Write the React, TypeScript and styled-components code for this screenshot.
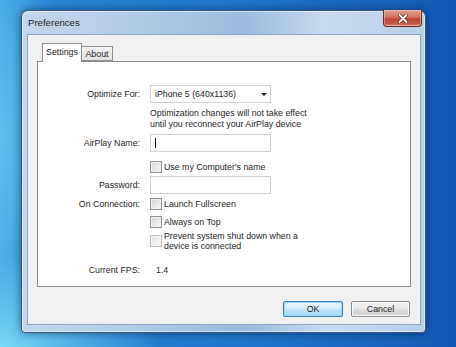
import React from "react";
import styled, { createGlobalStyle } from "styled-components";

const Global = createGlobalStyle`
  html, body { margin: 0; padding: 0; }
  body {
    width: 456px; height: 347px; overflow: hidden;
    font-family: "Liberation Sans", Arial, sans-serif;
  }
  * { box-sizing: border-box; }
`;

const Desktop = styled.div`
  width: 456px;
  height: 347px;
  padding: 10px 0 0 21px;
  background:
    radial-gradient(ellipse 160px 90px at 0% 100%, rgba(130, 225, 250, 0.85), rgba(130, 225, 250, 0) 100%),
    radial-gradient(ellipse 60px 200px at 0% 40%, rgba(110, 205, 245, 0.7), rgba(110, 205, 245, 0) 100%),
    linear-gradient(to right, #3aa3e0 0%, #2a86d6 12%, #1f74cc 55%, #1862bd 85%, #1256b3 100%);
`;

const Window = styled.div`
  width: 405px;
  height: 323px;
  display: flex;
  flex-direction: column;
  padding: 0 4px 7px 5px;
  border: 1px solid #38557a;
  border-radius: 7px 7px 4px 4px;
  background:
    linear-gradient(to right, rgba(255,255,255,0.25), rgba(255,255,255,0) 30%, rgba(70,120,180,0.2) 55%, rgba(255,255,255,0.3) 75%, rgba(255,255,255,0.1) 100%),
    #b0cae6;
  box-shadow: 0 0 8px rgba(0, 20, 60, 0.55), inset 0 0 0 1px rgba(255, 255, 255, 0.55);
`;

const TitleBar = styled.div`
  height: 23px;
  display: flex;
  align-items: center;
  padding-left: 1px;
`;

const Title = styled.span`
  font-size: 9.6px;
  color: #1b1b1b;
  margin-top: -1px;
`;

const CloseButton = styled.div`
  margin-left: auto;
  margin-right: -1px;
  margin-top: -1px;
  align-self: flex-start;
  width: 39px;
  height: 17px;
  display: flex;
  align-items: center;
  justify-content: center;
  border: 1px solid #6e2a22;
  border-top: none;
  border-radius: 0 0 4px 4px;
  background: linear-gradient(#e3a18f 0%, #d27560 45%, #bd4530 55%, #c55a42 85%, #d98a72 100%);
  box-shadow: inset 0 0 0 1px rgba(255, 220, 210, 0.4);
`;

const Client = styled.div`
  flex: 1;
  display: flex;
  flex-direction: column;
  background: #f0f0f0;
  border: 1px solid #8aa3c2;
  padding: 9px 9px 0 9px;
`;

const TabStrip = styled.div`
  height: 17px;
  display: flex;
  align-items: flex-end;
  padding-left: 5px;
`;

const Tab = styled.div<{ $active?: boolean }>`
  position: relative;
  z-index: ${(p) => (p.$active ? 2 : 1)};
  display: flex;
  align-items: center;
  justify-content: center;
  font-size: 8.8px;
  color: #1b1b1b;
  width: ${(p) => (p.$active ? "40px" : "31px")};
  height: ${(p) => (p.$active ? "19px" : "15px")};
  margin-bottom: ${(p) => (p.$active ? "-1px" : "0")};
  border: 1px solid #8c8e94;
  border-bottom: ${(p) => (p.$active ? "none" : "1px solid #8c8e94")};
  border-left: ${(p) => (p.$active ? "1px solid #8c8e94" : "none")};
  background: ${(p) => (p.$active ? "#ffffff" : "linear-gradient(#f4f4f4, #e2e2e2)")};
  padding-bottom: ${(p) => (p.$active ? "2px" : "0")};
`;

const Panel = styled.div`
  height: 226px;
  border: 1px solid #8c8e94;
  background: #ffffff;
  padding-top: 23px;
  display: flex;
  flex-direction: column;
`;

const Row = styled.div<{ $mt: number; $h?: number }>`
  display: flex;
  align-items: center;
  margin-top: ${(p) => p.$mt}px;
  min-height: ${(p) => p.$h ?? 13}px;
`;

const Label = styled.div`
  width: 102px;
  margin-right: 10px;
  text-align: right;
  font-size: 8.8px;
  color: #1e1e1e;
  flex-shrink: 0;
`;

const Value = styled.div`
  font-size: 8.8px;
  color: #1e1e1e;
  padding-left: 6px;
`;

const Dropdown = styled.div`
  width: 121px;
  height: 18px;
  border: 1px solid #cfd2d6;
  background: #ffffff;
  display: flex;
  align-items: center;
  padding: 0 3px 0 4px;
  font-size: 8.8px;
  color: #1e1e1e;
`;

const Arrow = styled.span`
  margin-left: auto;
  width: 0;
  height: 0;
  border-left: 3px solid transparent;
  border-right: 3px solid transparent;
  border-top: 3px solid #222;
`;

const Note = styled.div`
  font-size: 8.8px;
  line-height: 11px;
  color: #1e1e1e;
`;

const TextInput = styled.div`
  width: 121px;
  height: 18px;
  border: 1px solid #cdd1d7;
  background: #ffffff;
  display: flex;
  align-items: center;
  padding-left: 4px;
`;

const Caret = styled.span`
  width: 1px;
  height: 10px;
  background: #111;
`;

const CheckRow = styled.div`
  display: flex;
  align-items: center;
  gap: 2px;
  font-size: 8.8px;
  color: #1e1e1e;
`;

const Box = styled.span<{ $disabled?: boolean }>`
  width: 12px;
  height: 12px;
  flex-shrink: 0;
  border: 1px solid ${(p) => (p.$disabled ? "#bdbdbd" : "#8f9094")};
  background: ${(p) =>
    p.$disabled
      ? "linear-gradient(135deg, #e6e6e6, #f6f6f6)"
      : "linear-gradient(135deg, #d6d6d6, #f7f7f7)"};
  box-shadow: inset 0 0 0 1px ${(p) => (p.$disabled ? "#f4f4f4" : "#f2f2f2")};
`;

const CheckText = styled.span`
  line-height: 10px;
`;

const ButtonRow = styled.div`
  margin-top: 14px;
  display: flex;
  justify-content: flex-end;
  gap: 8px;
  padding-right: 1px;
`;

const Button = styled.div<{ $default?: boolean; $w: number }>`
  width: ${(p) => p.$w}px;
  height: 16px;
  display: flex;
  align-items: center;
  justify-content: center;
  font-size: 8.8px;
  color: #1b1b1b;
  border-radius: 2px;
  border: 1px solid ${(p) => (p.$default ? "#3c7fb1" : "#8a8a8a")};
  background: ${(p) =>
    p.$default
      ? "linear-gradient(#eaf6fd 0%, #d9f0fc 45%, #bee6fd 55%, #a7d9f5 100%)"
      : "linear-gradient(#f2f2f2 0%, #ebebeb 45%, #dddddd 55%, #cfcfcf 100%)"};
  box-shadow: inset 0 0 0 1px ${(p) => (p.$default ? "#9ad6f5" : "#fbfbfb")};
`;

export default function App() {
  return (
    <>
      <Global />
      <Desktop>
        <Window>
          <TitleBar>
            <Title>Preferences</Title>
            <CloseButton>
              <svg width="10" height="9" viewBox="0 0 10 9">
                <path d="M1.5 1 L8.5 8 M8.5 1 L1.5 8" stroke="#5a1a12" strokeWidth="3.2" strokeLinecap="round" />
                <path d="M1.5 1 L8.5 8 M8.5 1 L1.5 8" stroke="#ffffff" strokeWidth="1.8" strokeLinecap="round" />
              </svg>
            </CloseButton>
          </TitleBar>
          <Client>
            <TabStrip>
              <Tab $active>Settings</Tab>
              <Tab>About</Tab>
            </TabStrip>
            <Panel>
              <Row $mt={0} $h={18}>
                <Label>Optimize For:</Label>
                <Dropdown>
                  iPhone 5 (640x1136)
                  <Arrow />
                </Dropdown>
              </Row>
              <Row $mt={5} $h={22}>
                <Label />
                <Note>
                  Optimization changes will not take effect
                  <br />
                  until you reconnect your AirPlay device
                </Note>
              </Row>
              <Row $mt={4} $h={18}>
                <Label>AirPlay Name:</Label>
                <TextInput>
                  <Caret />
                </TextInput>
              </Row>
              <Row $mt={8} $h={13}>
                <Label />
                <CheckRow>
                  <Box />
                  <CheckText>Use my Computer's name</CheckText>
                </CheckRow>
              </Row>
              <Row $mt={3} $h={18}>
                <Label>Password:</Label>
                <TextInput />
              </Row>
              <Row $mt={3} $h={13}>
                <Label>On Connection:</Label>
                <CheckRow>
                  <Box />
                  <CheckText>Launch Fullscreen</CheckText>
                </CheckRow>
              </Row>
              <Row $mt={5} $h={13}>
                <Label />
                <CheckRow>
                  <Box />
                  <CheckText>Always on Top</CheckText>
                </CheckRow>
              </Row>
              <Row $mt={3} $h={20}>
                <Label />
                <CheckRow>
                  <Box $disabled />
                  <CheckText>
                    Prevent system shut down when a
                    <br />
                    device is connected
                  </CheckText>
                </CheckRow>
              </Row>
              <Row $mt={12} $h={13}>
                <Label>Current FPS:</Label>
                <Value>1.4</Value>
              </Row>
            </Panel>
            <ButtonRow>
              <Button $default $w={60}>OK</Button>
              <Button $w={59}>Cancel</Button>
            </ButtonRow>
          </Client>
        </Window>
      </Desktop>
    </>
  );
}
